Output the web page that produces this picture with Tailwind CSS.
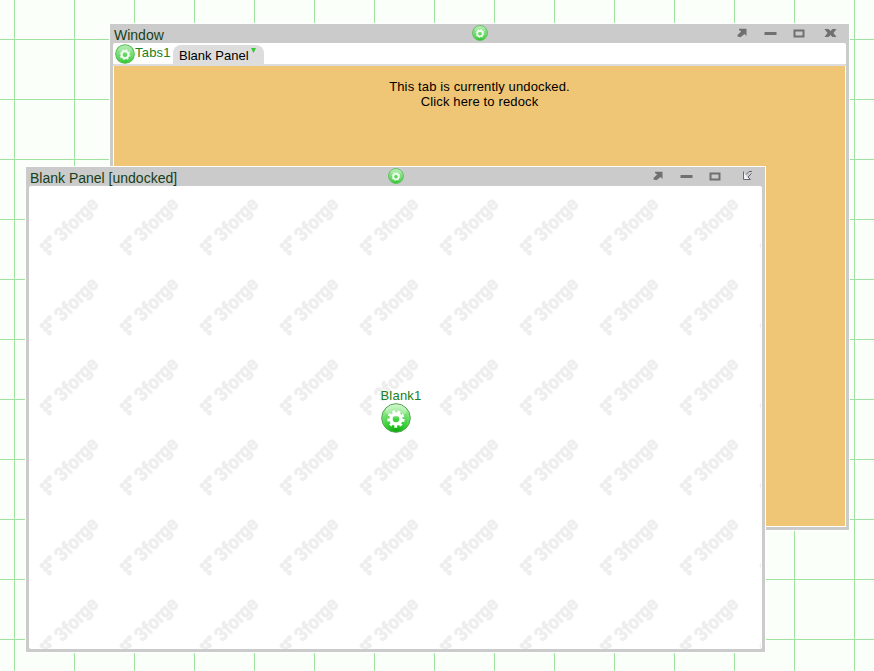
<!DOCTYPE html>
<html lang="en"><head><meta charset="utf-8"><title>Desktop</title>
<script src="https://cdn.jsdelivr.net/npm/@tailwindcss/browser@4"></script></head>
<body class="relative w-[874px] h-[671px] overflow-hidden bg-[#fafff9] font-['Liberation_Sans',Arial,sans-serif] text-[13px] leading-[15px]">
<svg class="absolute w-0 h-0"><defs>
<radialGradient id="ball" cx=".5" cy="1" r="1"><stop offset="0" stop-color="#08a808"/><stop offset=".35" stop-color="#32cc30"/><stop offset=".7" stop-color="#74e270"/><stop offset="1" stop-color="#c4f6c0"/></radialGradient>
<radialGradient id="pale" cx=".5" cy=".95" r=".95"><stop offset="0" stop-color="#30c830"/><stop offset=".5" stop-color="#68d866"/><stop offset="1" stop-color="#a8eaa6"/></radialGradient>
<symbol id="gear" viewBox="0 0 30 30"><circle cx="15" cy="15" r="14.3" fill="url(#ball)" stroke="#53a353" stroke-width="1"/><ellipse cx="15" cy="8" rx="10.5" ry="6.5" fill="#fff" opacity=".3"/><circle cx="15" cy="16" r="5" fill="none" stroke="#fff" stroke-width="3.4"/><circle cx="15" cy="16" r="7.4" fill="none" stroke="#fff" stroke-width="2.6" stroke-dasharray="2.9 2.265"/></symbol>
<symbol id="gear-small" viewBox="0 0 30 30"><circle cx="15" cy="15" r="14" fill="url(#pale)" stroke="#55bd55" stroke-width="1.6"/><ellipse cx="15" cy="8" rx="10" ry="6" fill="#fff" opacity=".2"/><circle cx="15" cy="16" r="5.200" fill="none" stroke="#effcef" stroke-width="3.4"/><circle cx="15" cy="16" r="7.4" fill="none" stroke="#effcef" stroke-width="2" stroke-dasharray="2.9 2.9" opacity=".75"/></symbol>
<symbol id="arrow" viewBox="0 0 10 9"><path d="M2 0H9.500v7.500L7.500 5.500 3.500 8.800 .5 8V6.500L4.200 3 2 1.500z" fill="#707070"/></symbol>
<pattern id="grid" x="14" y="39" width="60" height="60" patternUnits="userSpaceOnUse"><path d="M0 .5H60M.5 0V60" stroke="#a0e2a0"/></pattern>
<pattern id="mark" width="80" height="80" patternUnits="userSpaceOnUse"><g fill="#eeeeee"><text transform="translate(33 56.500) rotate(-45)" font-family="Inter" font-weight="700" font-size="18.5" textLength="53" lengthAdjust="spacingAndGlyphs" stroke="#eeeeee" stroke-width=".9">3forge</text><g transform="translate(13 59.500) rotate(-45)"><circle r="2.600"/><circle cx="5.200" r="2.600"/><rect x="7.800" y="-2.600" width="5.200" height="5.200" rx="1.800"/><circle cy="5.200" r="2.600"/><circle cx="5.200" cy="5.200" r="2.600"/><circle cy="10.400" r="2.600"/></g></g></pattern>
</defs></svg>
<svg class="absolute inset-0" width="874" height="671"><rect width="874" height="671" fill="url(#grid)"/></svg>

<section class="absolute left-[110px] top-[24px] w-[739px] h-[506px] bg-[#cbcbcb] outline outline-white px-[3px] pb-[3px] flex flex-col">
<header class="relative h-[19px] shrink-0 flex justify-between"><h1 class="pl-px pt-[3px] text-[14px] leading-4 text-[#173f17]">Window</h1>
<svg class="absolute left-[359px] top-px" width="16" height="16"><use href="#gear-small"/></svg>
<svg class="mr-[3px]" width="110" height="19"><use href="#arrow" x="4" y="4.500" width="10" height="9"/><path d="M31.500 8h12v3h-12z" fill="#707070"/><path d="M61.500 6.500h9v6h-9z" fill="none" stroke="#707070" stroke-width="2"/><path d="M91.500 5h4l2 2 2-2h4l-3 4 3 4h-4l-2-2-2 2h-4l3-4z" fill="#707070"/></svg></header>
<main class="flex-1 flex flex-col bg-white rounded-t-[2px]">
<nav class="h-[23px] shrink-0 flex border-b-2 border-[#dddddd]"><svg class="ml-[2px] mt-px shrink-0" width="20" height="20"><use href="#gear-small"/></svg><span class="pt-[2px] text-[#208020] tracking-[.2px] w-[38px] whitespace-nowrap">Tabs1</span>
<span class="relative w-[91px] bg-[#dddddd] rounded-t-lg pt-[3px] mt-[2px] h-[20px] pl-[6px] text-black whitespace-nowrap leading-[15px] tracking-[.02px]">Blank Panel<svg class="absolute left-[78px] top-[3px]" width="5" height="5"><path d="M0 0h5L2.500 5z" fill="#32c832"/></svg></span></nav>
<div class="flex-1 mx-px mb-px bg-[#efc576] text-center text-black pt-[13px] tracking-[.14px]">This tab is currently undocked.<br>Click here to redock</div>
</main></section>

<section class="absolute left-[26px] top-[167px] w-[739px] h-[485px] bg-[#cbcbcb] outline outline-white px-[3px] pb-[3px] flex flex-col">
<header class="relative h-[19px] shrink-0 flex justify-between"><h1 class="pl-px pt-[3px] text-[14px] leading-4 text-[#173f17]">Blank Panel [undocked]</h1>
<svg class="absolute left-[359px] top-px" width="16" height="16"><use href="#gear-small"/></svg>
<svg class="mr-[3px]" width="110" height="19"><use href="#arrow" x="4" y="4.500" width="10" height="9"/><path d="M31.500 8h12v3h-12z" fill="#707070"/><path d="M61.500 6.500h9v6h-9z" fill="none" stroke="#707070" stroke-width="2"/><path d="M94.500 4.500v8h7l-2.500-2.500 3.500-3.500M97 7.500l3-3h3" fill="none" stroke="#66667a"/><path d="M95 6v6h5z" fill="#f3f3f6"/></svg></header>
<main class="relative flex-1 bg-white rounded-[2px] overflow-hidden"><svg class="absolute inset-0" width="732" height="463"><rect width="732" height="463" fill="url(#mark)"/></svg>
<div class="absolute left-[351.5px] top-[202px] w-[42px] text-[#208020] tracking-[.2px]">Blank1<svg class="-ml-[.5px]" width="32" height="30"><use href="#gear" width="30" height="30" x="1"/></svg></div></main></section>
</body></html>
